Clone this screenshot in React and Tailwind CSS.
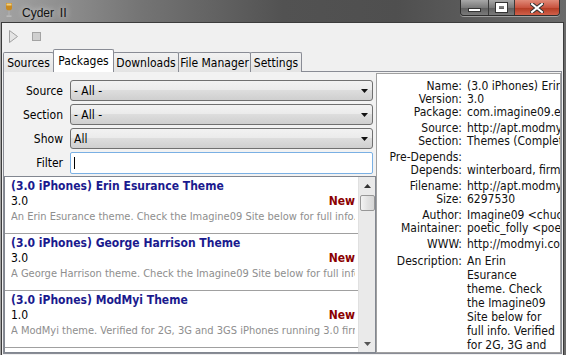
import React from "react";

const FONT = "[font-family:'DejaVu_Sans_Condensed','DejaVu_Sans',sans-serif]";

const items = [
  {
    title: "(3.0 iPhones) Erin Esurance Theme",
    version: "3.0",
    desc: "An Erin Esurance theme. Check the Imagine09 Site below for full info. Verified for 2G, 3G and 3GS",
  },
  {
    title: "(3.0 iPhones) George Harrison Theme",
    version: "3.0",
    desc: "A George Harrison theme. Check the Imagine09 Site below for full info. Verified for 2G, 3G",
  },
  {
    title: "(3.0 iPhones) ModMyi Theme",
    version: "1.0",
    desc: "A ModMyi theme. Verified for 2G, 3G and 3GS iPhones running 3.0 firmware.",
  },
];

const details = [
  [
    ["Name:", "(3.0 iPhones) Erin Esurance Theme"],
    ["Version:", "3.0"],
    ["Package:", "com.imagine09.erinesurance"],
  ],
  [
    ["Source:", "http://apt.modmyi.com/"],
    ["Section:", "Themes (Complete)"],
  ],
  [
    ["Pre-Depends:", ""],
    ["Depends:", "winterboard, firmware (>= 3.0)"],
  ],
  [
    ["Filename:", "http://apt.modmyi.com/debs/"],
    ["Size:", "6297530"],
  ],
  [
    ["Author:", "Imagine09 <chuck@imagine09.com>"],
    ["Maintainer:", "poetic_folly <poetic_folly@modmyi.com>"],
  ],
  [["WWW:", "http://modmyi.com/"]],
];

const descLines = [
  "An Erin",
  "Esurance",
  "theme. Check",
  "the Imagine09",
  "Site below for",
  "full info. Verified",
  "for 2G, 3G and",
];

function Combo({ value }) {
  return (
    <div className="h-[21px] rounded-[3px] border border-[#707070] bg-[linear-gradient(#f2f2f2_0%,#ebebeb_45%,#dddddd_50%,#cfcfcf_100%)] flex items-center pl-[3px] pr-[4px] text-[12px] text-black">
      <span className="flex-1">{value}</span>
      <svg width="7" height="4" viewBox="0 0 7 4">
        <path d="M0 0h7L3.5 4z" fill="#111" />
      </svg>
    </div>
  );
}

function FormRow({ label, children }) {
  return (
    <div className="flex items-center h-[21px]">
      <div className="w-[59px] text-right text-[12px] text-black">{label}</div>
      <div className="ml-[7px] w-[303px]">{children}</div>
    </div>
  );
}

function Tab({ label, w, active, first }) {
  const edge = first ? "" : "-ml-[1px]";
  if (active) {
    return (
      <div
        className={`${w} ${edge} h-[23px] relative z-10 border border-b-0 border-[#898c95] bg-white rounded-t-[2px] flex items-start justify-center pt-[2px] text-[12px] text-black`}
      >
        {label}
      </div>
    );
  }
  return (
    <div
      className={`${w} ${edge} h-[20px] border border-b-0 border-[#898c95] bg-[linear-gradient(#f2f2f2,#e3e3e3)] rounded-t-[2px] flex items-center justify-center text-[12px] text-black`}
    >
      {label}
    </div>
  );
}

export default function App() {
  return (
    <div
      className={`${FONT} w-[566px] h-[355px] overflow-hidden flex flex-col bg-[linear-gradient(90deg,#a3a3a3_0%,#747474_25%,#525252_50%,#4f4f4f_70%,#6a6a6a_100%)]`}
    >
      {/* title bar */}
      <div className="h-[24px] flex items-start">
        <svg width="8" height="16" viewBox="0 0 8 16" className="ml-[5px] mt-[3px]">
          <path d="M1 0h6v5c0 1.5-1.2 2.5-3 2.5S1 6.5 1 5z" fill="#c98a20" />
          <path d="M1.5 0.5h5v2h-5z" fill="#f0d080" />
          <rect x="3.4" y="7.5" width="1.2" height="5" fill="#b0b0b0" />
          <rect x="1.5" y="12.5" width="5" height="1.3" fill="#c0c0c0" />
        </svg>
        <div className="ml-[9px] mt-[4px] text-[12px] text-[#111] [text-shadow:0_0_6px_rgba(255,255,255,0.8)] [font-family:'Liberation_Sans','Noto_Sans_CJK_KR',sans-serif]">
          Cyder Ⅱ
        </div>
        <div className="ml-auto mr-[6px] flex h-[16px] rounded-b-[4px] border border-t-0 border-[#2e2e2e] overflow-hidden shadow-[0_1px_0_rgba(255,255,255,0.4)]">
          <div className="w-[28px] h-full bg-[linear-gradient(#a8a8a8,#7a7a7a_50%,#5e5e5e_51%,#7a7a7a)] border-r border-[#3a3a3a] flex items-center justify-center">
            <div className="w-[13px] h-[4px] mt-[5px] bg-white border border-[#333]" />
          </div>
          <div className="w-[26px] h-full bg-[linear-gradient(#a8a8a8,#7a7a7a_50%,#5e5e5e_51%,#7a7a7a)] border-r border-[#3a3a3a] flex items-center justify-center">
            <div className="w-[11px] h-[9px] border-[3px] border-white outline outline-1 outline-[#333]" />
          </div>
          <div className="w-[44px] h-full bg-[linear-gradient(#e08a78,#c95440_50%,#b23a22_51%,#d0604a)] flex items-center justify-center">
            <svg width="14" height="10" viewBox="0 0 14 10">
              <path d="M2 1l10 8M12 1L2 9" stroke="#333" strokeWidth="4" strokeLinecap="square" />
              <path d="M2 1l10 8M12 1L2 9" stroke="#fff" strokeWidth="2" strokeLinecap="square" />
            </svg>
          </div>
        </div>
      </div>

      {/* client */}
      <div className="flex-1 ml-[1px] mr-[2px] mb-[2px] border border-[#3c3c3c] bg-[#f0f0f0] flex flex-col px-[1px]">
        {/* toolbar */}
        <div className="h-[27px] flex items-center gap-[14px] pl-[6px]">
          <svg width="9" height="13" viewBox="0 0 9 13">
            <path d="M0.5 0.5v12L8.5 6.5z" fill="#e4e4e4" stroke="#a0a0a0" />
          </svg>
          <div className="w-[9px] h-[9px] bg-[#cfcfcf] border border-[#a3a3a3]" />
        </div>

        {/* tabs */}
        <div className="h-[22px] flex items-end relative z-10 -mb-[1px]">
          <Tab label="Sources" w="w-[51px]" first />
          <Tab label="Packages" w="w-[61px]" active />
          <Tab label="Downloads" w="w-[66px]" />
          <Tab label="File Manager" w="w-[73px]" />
          <Tab label="Settings" w="w-[52px]" />
        </div>

        {/* pane */}
        <div className="flex-1 border border-[#898c95] bg-[#f2f2f2] flex min-h-0 mb-[1px]">
          {/* left side */}
          <div className="w-[372px] flex flex-col">
            <div className="pt-[8px] flex flex-col gap-[3px]">
              <FormRow label="Source">
                <Combo value="- All -" />
              </FormRow>
              <FormRow label="Section">
                <Combo value="- All -" />
              </FormRow>
              <FormRow label="Show">
                <Combo value="All" />
              </FormRow>
              <FormRow label="Filter">
                <div className="h-[22px] rounded-[2px] border border-[#7ab0e4] bg-white flex items-center pl-[3px]">
                  <div className="w-[1px] h-[12px] bg-black" />
                </div>
              </FormRow>
            </div>
            <div className="mt-[3px] flex-1 min-h-0 border border-[#828790] bg-white flex overflow-hidden">
              <div className="flex-1 min-w-0 flex flex-col">
                {items.map((it) => (
                  <div
                    key={it.title}
                    className="h-[57px] shrink-0 border-b border-[#a0a0a0] pl-[6px] pr-[3px] pt-[2px] flex flex-col"
                  >
                    <div className="text-[12px] leading-[15px] font-bold text-[#1a1a8e] whitespace-nowrap">
                      {it.title}
                    </div>
                    <div className="flex text-[12px] leading-[14px] text-black">
                      <span className="flex-1">{it.version}</span>
                      <span className="font-bold text-[#8b0000]">New</span>
                    </div>
                    <div className="mt-[2px] text-[11px] leading-[14px] text-[#8e8e8e] whitespace-nowrap overflow-hidden">
                      {it.desc}
                    </div>
                  </div>
                ))}
              </div>
              {/* scrollbar */}
              <div className="w-[17px] shrink-0 bg-[#eaeaea] border-l border-[#e0e0e0] flex flex-col items-center">
                <div className="h-[17px] flex items-center justify-center">
                  <svg width="7" height="4" viewBox="0 0 7 4">
                    <path d="M0 4h7L3.5 0z" fill="#333" />
                  </svg>
                </div>
                <div className="w-[15px] h-[16px] mt-[1px] rounded-[2px] border border-[#979797] bg-[linear-gradient(90deg,#f3f3f3,#e2e2e2_50%,#d6d6d6)]" />
                <div className="flex-1" />
                <div className="h-[17px] flex items-center justify-center">
                  <svg width="7" height="4" viewBox="0 0 7 4">
                    <path d="M0 0h7L3.5 4z" fill="#555" />
                  </svg>
                </div>
              </div>
            </div>
          </div>

          {/* right side */}
          <div className="mt-[1px] flex-1 min-w-0 border border-[#a0a0a0] bg-white overflow-hidden pt-[6px] text-[12px] text-[#111]">
            {details.map((group, gi) => (
              <div key={gi} className="mb-[3px]">
                {group.map(([k, v]) => (
                  <div key={k} className="flex leading-[13px] h-[13px]">
                    <div className="w-[85px] shrink-0 text-right">{k}</div>
                    <div className="ml-[5px] whitespace-nowrap">{v}</div>
                  </div>
                ))}
              </div>
            ))}
            <div className="flex">
              <div className="w-[85px] shrink-0 text-right leading-[14px]">Description:</div>
              <div className="ml-[5px] leading-[14px] whitespace-nowrap">
                {descLines.map((l) => (
                  <div key={l}>{l}</div>
                ))}
              </div>
            </div>
          </div>
        </div>
      </div>
    </div>
  );
}
